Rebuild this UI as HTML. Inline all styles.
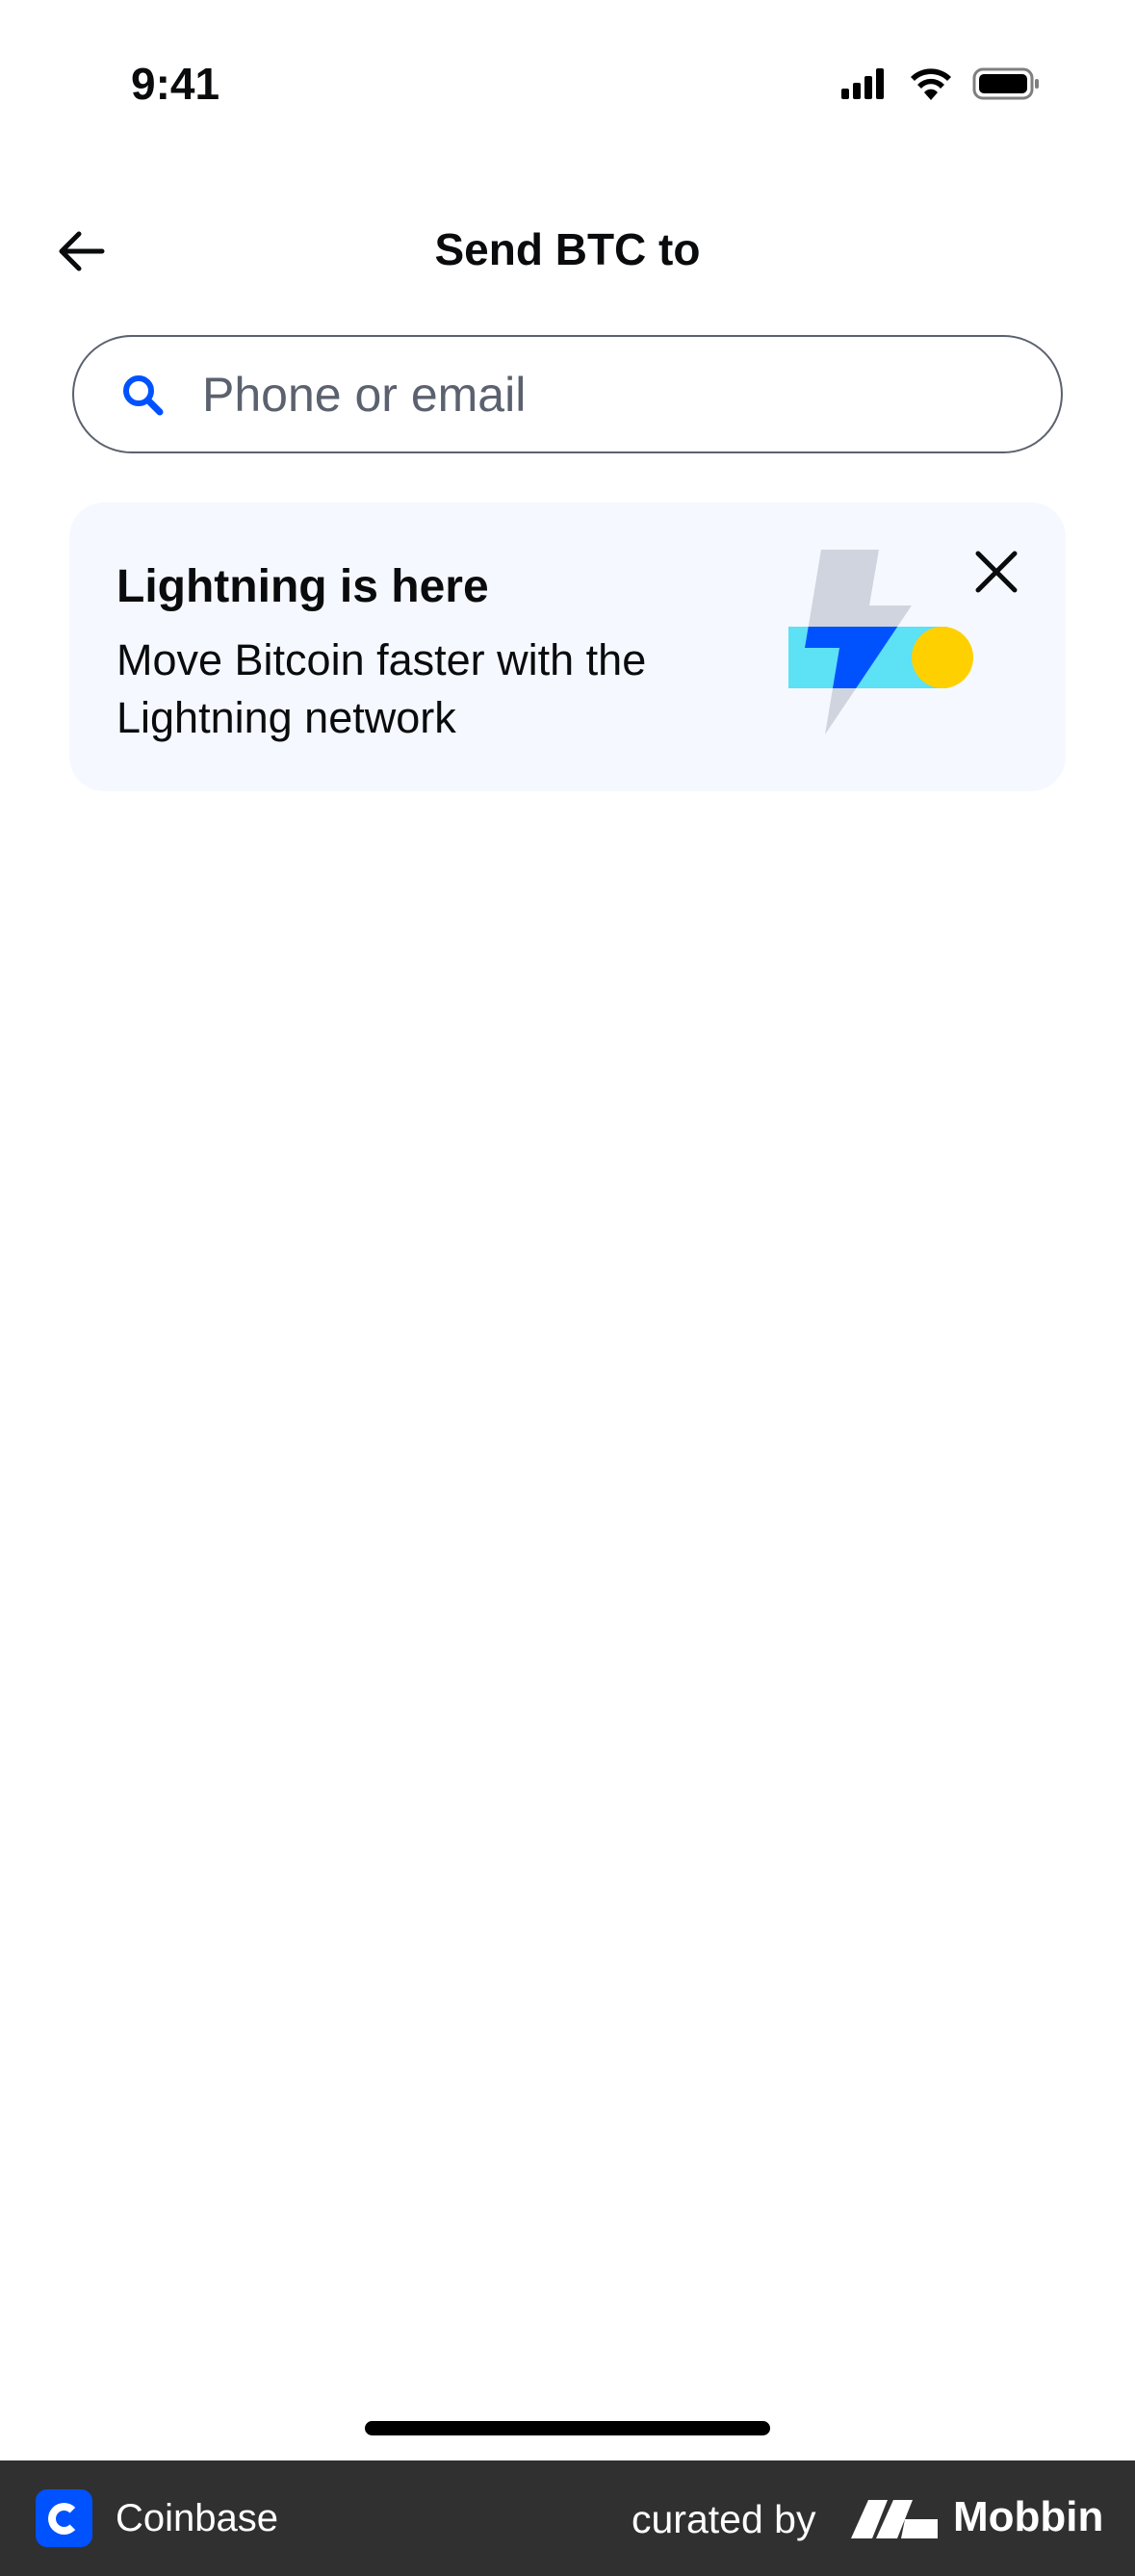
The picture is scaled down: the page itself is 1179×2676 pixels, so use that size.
<!DOCTYPE html>
<html><head><meta charset="utf-8"><style>
*{margin:0;padding:0;box-sizing:border-box}
body{width:1179px;height:2676px;background:#fff;position:relative;overflow:hidden;font-family:"Liberation Sans",sans-serif;color:#0a0b0d}
.abs{position:absolute;white-space:nowrap}
</style></head><body>
<div class="abs" style="left:136px;top:60px;font-size:46px;font-weight:bold">9:41</div>
<svg class="abs" style="left:872px;top:68px" width="220" height="40" viewBox="0 0 220 40">
<rect x="2" y="24" width="8" height="11" rx="2" fill="#000"/><rect x="14" y="18" width="8" height="17" rx="2" fill="#000"/><rect x="26" y="11" width="8" height="24" rx="2" fill="#000"/><rect x="38" y="3" width="8" height="32" rx="2" fill="#000"/>
<path d="M74 12a30 30 0 0 1 42 0l-4 4a24 24 0 0 0-34 0z M81 20a19 19 0 0 1 28 0l-4 4a13 13 0 0 0-20 0z M88 28a9 9 0 0 1 14 0l-7 8z" fill="#000"/>
<rect x="140" y="4" width="60" height="30" rx="9" fill="none" stroke="#000" stroke-width="3" opacity=".5"/><rect x="145" y="9" width="50" height="20" rx="5" fill="#000"/><rect x="203" y="14" width="4" height="10" rx="2" fill="#000" opacity=".5"/>
</svg>
<svg class="abs" style="left:58px;top:238px" width="52" height="46" viewBox="0 0 52 46"><path d="M48 23H6M24 5L6 23l18 18" fill="none" stroke="#0a0b0d" stroke-width="5" stroke-linecap="round" stroke-linejoin="round"/></svg>
<div class="abs" style="left:0;width:1179px;top:232px;text-align:center;font-size:46px;font-weight:bold">Send BTC to</div>
<div class="abs" style="left:75px;top:348px;width:1029px;height:123px;border:2.5px solid #5b616e;border-radius:62px"></div>
<svg class="abs" style="left:124px;top:386px" width="50" height="50" viewBox="0 0 50 50"><circle cx="20" cy="20" r="13" fill="none" stroke="#0052ff" stroke-width="6"/><path d="M30 30l12 12" stroke="#0052ff" stroke-width="7" stroke-linecap="round"/></svg>
<div class="abs" style="left:210px;top:381px;font-size:50px;color:#5b616e">Phone or email</div>
<div class="abs" style="left:72px;top:522px;width:1035px;height:300px;background:#f5f8ff;border-radius:36px"></div>
<div class="abs" style="left:121px;top:582px;font-size:48px;font-weight:bold">Lightning is here</div>
<div class="abs" style="left:121px;top:656px;font-size:45px;line-height:60px">Move Bitcoin faster with the<br>Lightning network</div>
<svg class="abs" style="left:800px;top:540px" width="300" height="250" viewBox="800 540 300 250">
<defs><clipPath id="c"><rect x="819" y="651" width="165" height="64"/></clipPath></defs>
<rect x="819" y="651" width="165" height="64" fill="#5ce1f5"/>
<polygon points="853,571 913,571 903,629 947,629 857,763 872,673 836,673" fill="#cfd4de"/>
<polygon points="853,571 913,571 903,629 947,629 857,763 872,673 836,673" fill="#0052ff" clip-path="url(#c)"/>
<circle cx="979" cy="683" r="32" fill="#ffd000"/>
<path d="M1016 575l38 38M1054 575l-38 38" stroke="#0a0b0d" stroke-width="5" stroke-linecap="round"/>
</svg>
<div class="abs" style="left:379px;top:2515px;width:421px;height:15px;border-radius:8px;background:#000"></div>
<div class="abs" style="left:0;top:2556px;width:1179px;height:120px;background:#303030"></div>
<div class="abs" style="left:37px;top:2586px;width:59px;height:60px;background:#0052ff;border-radius:12px"></div>
<div class="abs" style="left:50px;top:2600px;width:33px;height:33px;border:8px solid #fff;border-radius:50%;border-right-color:transparent"></div>
<div class="abs" style="left:120px;top:2594px;font-size:40px;color:#fff">Coinbase</div>
<div class="abs" style="left:656px;top:2594px;font-size:41px;color:#fff">curated by</div>
<svg class="abs" style="left:884px;top:2595px" width="90" height="42" viewBox="0 0 90 42"><path d="M0 42L18 2h20L22 42z M26 42L44 2h20L48 42z M56 22h34v20H52z" fill="#fff"/></svg>
<div class="abs" style="left:990px;top:2590px;font-size:44px;font-weight:bold;color:#fff">Mobbin</div>
</body></html>
